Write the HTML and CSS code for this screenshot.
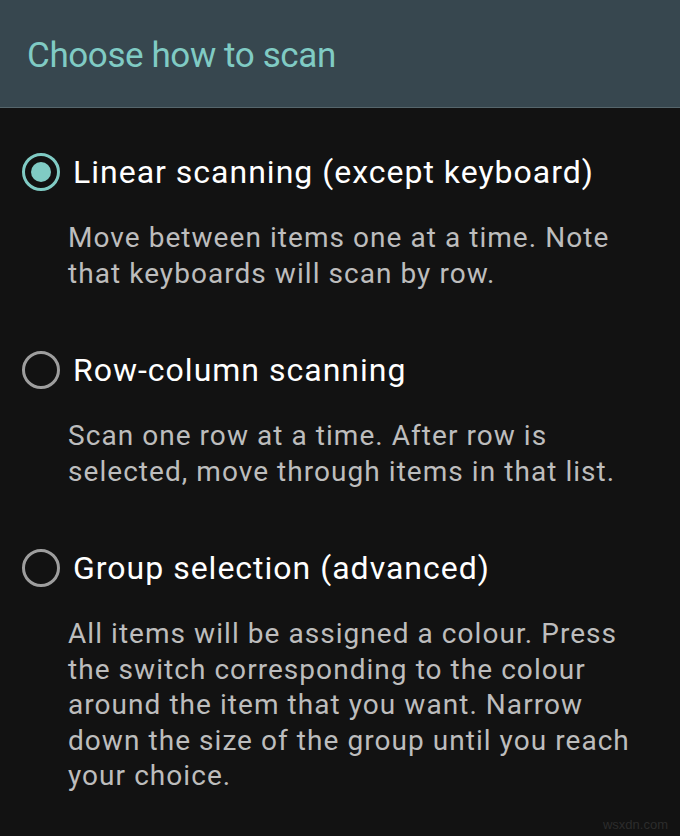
FILE: index.html
```html
<!DOCTYPE html>
<html>
<head>
<meta charset="utf-8">
<link rel="stylesheet" href="styles.css">
</head>
<body>
<div class="header"><h1 class="title">Choose how to scan</h1></div>
<div class="list">
  <div class="item">
    <div class="row"><span class="radio checked"></span><span class="label">Linear scanning (except keyboard)</span></div>
    <p class="desc">Move between items one at a time. Note that keyboards will scan by row.</p>
  </div>
  <div class="item">
    <div class="row"><span class="radio"></span><span class="label">Row-column scanning</span></div>
    <p class="desc">Scan one row at a time. After row is selected, move through items in that list.</p>
  </div>
  <div class="item">
    <div class="row"><span class="radio"></span><span class="label">Group selection (advanced)</span></div>
    <p class="desc">All items will be assigned a colour. Press the switch corresponding to the colour around the item that you want. Narrow down the size of the group until you reach your choice.</p>
  </div>
</div>
<div class="mark">wsxdn.com</div>
</body>
</html>
```
FILE: styles.css
```css
html, body { margin: 0; padding: 0; }
body {
  width: 680px;
  height: 836px;
  background: #121212;
  font-family: Roboto, "Noto Sans", sans-serif;
  overflow: hidden;
  position: relative;
}
.header {
  height: 108px;
  box-sizing: border-box;
  background: #37474f;
  border-bottom: 1px solid #56666c;
  display: flex;
  align-items: center;
  padding: 4px 0 0 27px;
}
.title {
  margin: 0;
  font-size: 35px;
  font-weight: 400;
  color: #80cbc4;
  letter-spacing: -0.4px;
}
.list { padding-top: 42px; }
.item { margin-bottom: 57px; }
.row {
  display: flex;
  align-items: center;
  height: 44px;
  padding-left: 22px;
}
.radio {
  width: 38px;
  height: 38px;
  border: 3px solid #9e9e9e;
  border-radius: 50%;
  box-sizing: border-box;
  position: relative;
  margin-right: 13px;
}
.radio.checked { border-color: #80cbc4; }
.radio.checked::after {
  content: "";
  position: absolute;
  left: 6px; top: 6px;
  width: 20px; height: 20px;
  border-radius: 50%;
  background: #80cbc4;
}
.label {
  font-size: 32px;
  color: #ffffff;
  letter-spacing: 1px;
}
.desc {
  margin: 26px 0 0 68px;
  width: 580px;
  font-size: 28px;
  line-height: 35.5px;
  letter-spacing: 1.05px;
  color: #bdbdbd;
}
.mark {
  position: absolute;
  right: 12px;
  bottom: 4px;
  font-size: 13px;
  color: #2c2c2c;
  font-family: "Liberation Sans", sans-serif;
}
```
